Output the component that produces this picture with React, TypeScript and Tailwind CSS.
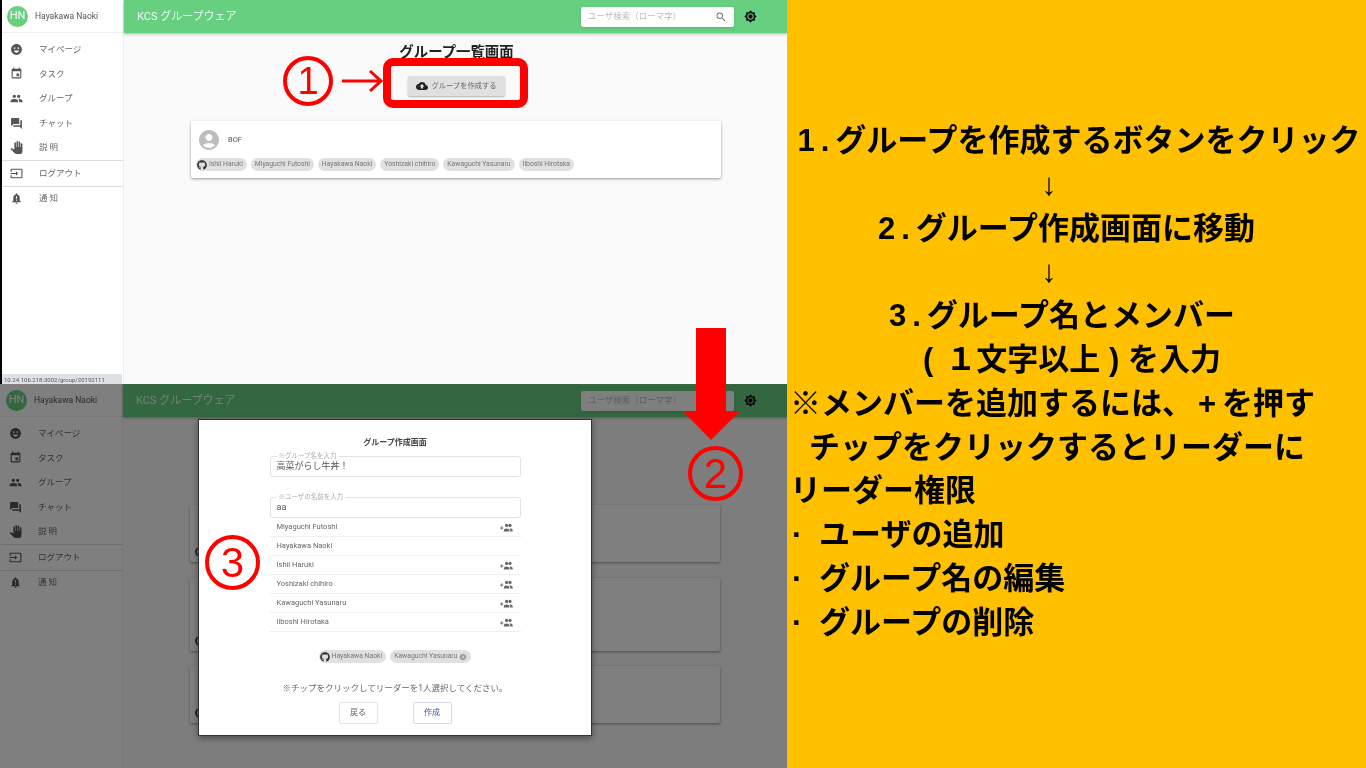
import { FaGithub } from "react-icons/fa"
import {
    MdAccountCircle,
    MdBrightness7,
    MdCancel,
    MdCloudUpload,
    MdEmojiEmotions,
    MdEvent,
    MdForum,
    MdInput,
    MdNotificationImportant,
    MdPanTool,
    MdPeople,
    MdSearch,
} from "react-icons/md"

/* DATA */
const NAV_TOP = [
    { label: "マイページ", icon: MdEmojiEmotions },
    { label: "タスク", icon: MdEvent },
    { label: "グループ", icon: MdPeople },
    { label: "チャット", icon: MdForum },
    { label: "説 明", icon: MdPanTool },
]

const MEMBERS = [
    { name: "Miyaguchi Futoshi", add: true },
    { name: "Hayakawa Naoki", add: false },
    { name: "Ishii Haruki", add: true },
    { name: "Yoshizaki chihiro", add: true },
    { name: "Kawaguchi Yasunaru", add: true },
    { name: "Iiboshi Hirotaka", add: true },
]

const CHIPS = ["Miyaguchi Futoshi", "Hayakawa Naoki", "Yoshizaki chihiro", "Kawaguchi Yasunaru", "Iiboshi Hirotaka"]

const FONT = "font-['Roboto','Noto_Sans_CJK_JP',sans-serif]"

/* ICONS */
function PlusPeople() {
    return (
        <svg width="13" height="9" viewBox="0 0 13 9" fill="#666">
            <path d="M0 5h3.4M1.7 3.3v3.4" stroke="#666" strokeWidth="0.9" fill="none" />
            <circle cx="6.6" cy="2.4" r="1.6" />
            <circle cx="10" cy="2.4" r="1.6" />
            <path d="M3.8 8.5V7.4c0-1.2 1.7-1.9 2.8-1.9s2.8.7 2.8 1.9v1.1zM10.2 8.5V7.3c0-.7-.3-1.2-.8-1.7h.7c1.1 0 2.6.6 2.6 1.8v1.1z" />
        </svg>
    )
}

/* SIDEBAR */
function NavRow({ label, icon: Icon }: { label: string; icon: typeof MdEvent }) {
    return (
        <div className="flex h-[24.6px] items-center text-[8.5px] text-[#666]">
            <Icon size={13} className="ml-[8px] mr-[16px] text-[#555]" />
            <span>{label}</span>
        </div>
    )
}

function Sidebar({ framed }: { framed: boolean }) {
    return (
        <aside className={`flex h-full shrink-0 flex-col border-r border-[#eee] bg-white ${framed ? "w-[124px] border-l-2 border-l-black" : "w-[123px] pl-px"}`}>
            <div className="flex h-[33px] items-center gap-[7px] border-b border-[#eee] pl-[5px]">
                <div className="flex size-[21px] items-center justify-center rounded-full bg-[#66cf80] text-[11px] text-white">HN</div>
                <span className="text-[8.5px] text-[#555]">Hayakawa Naoki</span>
            </div>
            <div className="pt-[4px]">
                {NAV_TOP.map((item) => (
                    <NavRow key={item.label} {...item} />
                ))}
            </div>
            <div className="border-y border-[#ddd]">
                <NavRow label="ログアウト" icon={MdInput} />
            </div>
            <NavRow label="通 知" icon={MdNotificationImportant} />
        </aside>
    )
}

/* HEADER */
function Header() {
    return (
        <header className="flex h-[33px] shrink-0 items-center bg-[#66cf80] pl-[13px] shadow-[0_1px_3px_rgba(0,0,0,0.3)]">
            <span className="pt-[1px] text-[11px] text-white/90">KCS グループウェア</span>
            <div className="ml-auto flex h-[20px] w-[153px] items-center justify-between rounded-[2px] bg-white px-[7px] shadow-sm">
                <span className="text-[8.5px] text-[#bbb]">ユーザ検索（ローマ字）</span>
                <MdSearch size={12} className="text-[#777]" />
            </div>
            <MdBrightness7 size={13} className="ml-[10px] mr-[30px] text-[#111]" />
        </header>
    )
}

/* CHIPS */
function Chip({ name, github, cancel }: { name: string; github?: boolean; cancel?: boolean }) {
    return (
        <span className="flex h-[13px] items-center gap-[2px] rounded-full bg-[#e0e0e0] px-[4px] text-[6.8px] whitespace-nowrap text-[#777]">
            {github && <FaGithub size={10} className="-ml-[3px] text-[#333]" />}
            {name}
            {cancel && <MdCancel size={8} className="text-[#999]" />}
        </span>
    )
}

function GroupCard() {
    return (
        <div className="mt-[25px] ml-[67px] flex h-[57px] w-[530px] flex-col rounded-[2px] bg-white pt-[8px] pl-[5px] shadow-[0_1px_3px_rgba(0,0,0,0.4)]">
            <div className="flex items-center gap-[8px] pl-[2px]">
                <MdAccountCircle size={24} className="-m-[1px] text-[#bdbdbd]" />
                <span className="text-[7.5px] text-[#555]">BOF</span>
            </div>
            <div className="mt-[7px] flex gap-[4px]">
                <Chip name="Ishii Haruki" github />
                {CHIPS.map((name) => (
                    <Chip key={name} name={name} />
                ))}
            </div>
        </div>
    )
}

function Outlined({ label, value }: { label: string; value: string }) {
    return (
        <fieldset className="h-[23px] w-[251px] rounded-[3px] border border-[#e2e2e2] pl-[6px]">
            <legend className="px-[2px] text-[6.5px] leading-[4px] text-[#aaa]">{label}</legend>
            <div className="pt-[2px] text-[9px] leading-[12px] text-[#555]">{value}</div>
        </fieldset>
    )
}

/* SCREENS */
function ListScreen() {
    return (
        <section className="relative flex h-[384px] overflow-hidden">
            <Sidebar framed />
            <main className="flex grow flex-col bg-[#fafafa]">
                <Header />
                <h1 className="mt-[12px] ml-[2px] text-center text-[14.4px] leading-[16px] font-bold text-[#222]">グループ一覧画面</h1>
                <button className="mt-[15px] ml-[284px] flex h-[20px] w-[97px] items-center justify-center gap-[3px] rounded-[2px] bg-[#e0e0e0] text-[7.3px] text-[#666] shadow-[0_1px_2px_rgba(0,0,0,0.3)]">
                    <MdCloudUpload size={12} className="text-[#222]" />
                    グループを作成する
                </button>
                <GroupCard />
            </main>
            <div className="absolute bottom-0 left-[2px] flex h-[10px] w-[120px] items-center bg-[#dee1e6] pl-[2px] text-[6px] text-[#555]">
                10.24.106.218:3002/group/20192111
            </div>
        </section>
    )
}

function GhostCard({ height, gap }: { height: number; gap: number }) {
    return (
        <div
            className="ml-[67px] flex w-[530px] items-end rounded-[2px] bg-white pb-[5px] pl-[5px] shadow-[0_1px_3px_rgba(0,0,0,0.4)]"
            style={{ height, marginTop: gap }}
        >
            <FaGithub size={10} className="text-[#333]" />
        </div>
    )
}

function CreateModal() {
    return (
        <div className="absolute top-[35px] left-[198px] flex h-[317px] w-[394px] flex-col items-center border border-[#333] bg-white shadow-[0_2px_6px_rgba(0,0,0,0.4)]">
            <h2 className="mt-[18px] text-[8px] leading-[10px] font-bold text-[#444]">グループ作成画面</h2>
            <div className="mt-[6px]">
                <Outlined label="※グループ名を入力" value="高菜がらし牛丼！" />
            </div>
            <div className="mt-[18px]">
                <Outlined label="※ユーザの名前を入力" value="aa" />
            </div>
            <ul className="w-[251px]">
                {MEMBERS.map((member) => (
                    <li key={member.name} className="flex h-[19px] items-center justify-between border-b border-[#eee] pr-[8px] pl-[7px] text-[7.5px] text-[#666]">
                        {member.name}
                        {member.add && <PlusPeople />}
                    </li>
                ))}
            </ul>
            <div className="mt-[18px] flex gap-[4px]">
                <Chip name="Hayakawa Naoki" github />
                <Chip name="Kawaguchi Yasunaru" cancel />
            </div>
            <p className="mt-[19px] text-[8.5px] leading-[12px] text-[#666]">※チップをクリックしてリーダーを1人選択してください。</p>
            <div className="mt-[8px] flex gap-[35px]">
                <button className="h-[22px] w-[39px] rounded-[2px] border border-[#e4e4e4] text-[8px] text-[#666]">戻る</button>
                <button className="h-[22px] w-[39px] rounded-[2px] border border-[#d5d8f0] text-[8px] text-[#3f51b5]">作成</button>
            </div>
        </div>
    )
}

function CreateScreen() {
    return (
        <section className="relative flex h-[384px] overflow-hidden">
            <Sidebar framed={false} />
            <main className="flex grow flex-col bg-[#fafafa]">
                <Header />
                <GhostCard height={57} gap={88} />
                <GhostCard height={73} gap={16} />
                <GhostCard height={57} gap={15} />
            </main>
            <div className="absolute inset-0 bg-black/50" />
            <CreateModal />
        </section>
    )
}

/* ANNOTATIONS */
function Circled({ n, className }: { n: number; className: string }) {
    return (
        <div className={`absolute flex items-center justify-center rounded-full border-[4px] border-[#f00] font-['Liberation_Sans',sans-serif] text-[#f00] ${className}`}>
            {n}
        </div>
    )
}

function Annotations() {
    return (
        <>
            <Circled n={1} className="top-[56px] left-[283px] size-[50px] text-[38px]" />
            <Circled n={2} className="top-[446px] left-[688px] size-[55px] text-[42px]" />
            <Circled n={3} className="top-[535px] left-[205px] size-[55px] text-[42px]" />
            <div className="absolute top-[58px] left-[383px] h-[50px] w-[145px] rounded-[10px] border-[8px] border-[#f00]" />
            <svg className="absolute top-[68px] left-[340px]" width="44" height="26" viewBox="0 0 44 26" fill="none" stroke="#f00" strokeWidth="3">
                <path d="M2 13H41M30 3 41 13 30 23" />
            </svg>
            <svg className="absolute top-[328px] left-[682px]" width="60" height="113" viewBox="0 0 60 113" fill="#f00">
                <path d="M14 0H44V83H58L29 112 1 83H14Z" />
            </svg>
        </>
    )
}

/* EXPLANATION PANEL */
function Bullet({ text }: { text: string }) {
    return (
        <p>
            <span className="inline-block w-[29px] pl-[2px]">·</span>
            {text}
        </p>
    )
}

function Explanation() {
    return (
        <aside className="flex grow flex-col bg-[#ffc000] pt-[119px] pl-px font-['Liberation_Sans','Noto_Sans_CJK_JP',sans-serif] text-[31px] leading-[43.8px] font-bold text-black">
            <div className="flex flex-col items-center pl-[4px]">
                <p><span className="tracking-[6px]">1.</span>グループを作成するボタンをクリック</p>
                <p className="mr-[60px] font-normal">↓</p>
                <p className="mr-[25px]"><span className="tracking-[6px]">2.</span>グループ作成画面に移動</p>
                <p className="mr-[60px] font-normal">↓</p>
                <p className="mr-[34px]"><span className="tracking-[6px]">3.</span>グループ名とメンバー</p>
                <p className="mr-[14px]">(<span className="ml-[12px]">１文字以上</span> ) を入力</p>
            </div>
            <div className="pl-[2px]">
                <p>※メンバーを追加するには、<span className="mr-[6px] ml-[5px]">+</span>を押す</p>
                <p className="pl-[19px]">チップをクリックするとリーダーに</p>
                <p>リーダー権限</p>
                <Bullet text="ユーザの追加" />
                <Bullet text="グループ名の編集" />
                <Bullet text="グループの削除" />
            </div>
        </aside>
    )
}

/* COMPONENT */
export default function App() {
    return (
        <div className={`relative flex h-[768px] w-[1366px] overflow-hidden bg-white blur-[0.35px] ${FONT}`}>
            <div className="flex w-[787px] shrink-0 flex-col">
                <ListScreen />
                <CreateScreen />
            </div>
            <Explanation />
            <Annotations />
        </div>
    )
}
